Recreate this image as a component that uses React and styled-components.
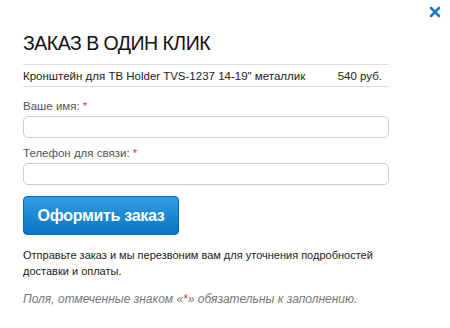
import React from 'react';
import styled, { createGlobalStyle } from 'styled-components';

const Global = createGlobalStyle`
  html, body {
    margin: 0;
    padding: 0;
    background: #fff;
  }
  body {
    font-family: "Liberation Sans", Arial, sans-serif;
    color: #222;
  }
`;

const Modal = styled.div`
  position: relative;
  width: 450px;
  height: 328px;
  box-sizing: border-box;
  padding: 28px 61px 0 23px;
`;

const Close = styled.button`
  position: absolute;
  top: 6px;
  right: 8px;
  width: 14px;
  height: 14px;
  padding: 0;
  border: none;
  background: none;
  cursor: pointer;
`;

const Title = styled.h1`
  margin: 0;
  font-size: 19.5px;
  font-weight: 400;
  letter-spacing: -0.5px;
  line-height: 30px;
  color: #111;
  padding-bottom: 6px;
`;

const ProductRow = styled.div`
  display: flex;
  justify-content: space-between;
  align-items: center;
  border-top: 1px solid #ddd;
  border-bottom: 1px solid #ddd;
  height: 21px;
  padding: 0 7px 0 0;
  font-size: 11.5px;
  color: #222;
  white-space: nowrap;
`;

const Form = styled.form`
  display: flex;
  flex-direction: column;
  padding-top: 12px;
`;

const Label = styled.label`
  font-size: 11.5px;
  color: #555;
  line-height: 14px;
  margin-bottom: 3px;
`;

const Star = styled.span`
  color: #e53935;
`;

const Input = styled.input`
  box-sizing: border-box;
  width: 366px;
  height: 22px;
  border: 1px solid #ccc;
  border-radius: 5px;
  margin: 0 0 8px;
  font-family: inherit;
`;

const Submit = styled.button`
  width: 156px;
  height: 39px;
  margin-top: 3px;
  border: 1px solid #0b6db5;
  border-radius: 4px;
  background: linear-gradient(#2f9fe3, #0a72c2);
  color: #fff;
  font-family: inherit;
  font-size: 16px;
  font-weight: 700;
  letter-spacing: -0.3px;
  white-space: nowrap;
  cursor: pointer;
`;

const Note = styled.p`
  margin: 12px 0 0;
  font-size: 11px;
  line-height: 16px;
  color: #222;
  white-space: nowrap;
`;

const Hint = styled.p`
  margin: 13px 0 0;
  font-size: 12px;
  font-style: italic;
  color: #777;
  white-space: nowrap;
`;

export default function App() {
  return (
    <>
      <Global />
      <Modal>
        <Close aria-label="close">
          <svg width="12" height="12" viewBox="0 0 12 12">
            <path d="M2 2 L10 10 M10 2 L2 10" stroke="#1a7cc8" strokeWidth="2.6" strokeLinecap="round" />
          </svg>
        </Close>
        <Title>ЗАКАЗ В ОДИН КЛИК</Title>
        <ProductRow>
          <span>Кронштейн для ТВ Holder TVS-1237 14-19" металлик</span>
          <span>540 руб.</span>
        </ProductRow>
        <Form onSubmit={(e) => e.preventDefault()}>
          <Label>Ваше имя: <Star>*</Star></Label>
          <Input type="text" />
          <Label>Телефон для связи: <Star>*</Star></Label>
          <Input type="text" />
          <div>
            <Submit type="submit">Оформить заказ</Submit>
          </div>
        </Form>
        <Note>
          Отправьте заказ и мы перезвоним вам для уточнения подробностей<br />
          доставки и оплаты.
        </Note>
        <Hint>Поля, отмеченные знаком «<Star>*</Star>» обязательны к заполнению.</Hint>
      </Modal>
    </>
  );
}
